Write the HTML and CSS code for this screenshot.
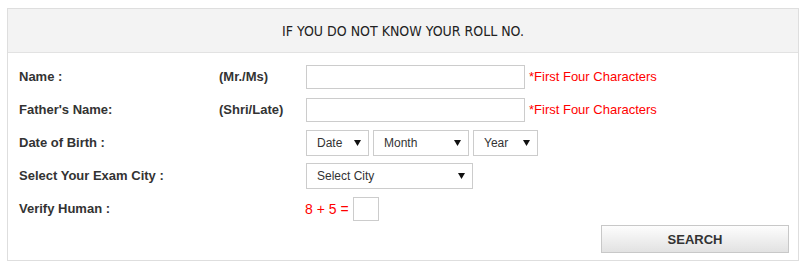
FILE: index.html
```html
<!DOCTYPE html>
<html lang="en">
<head>
    <meta charset="UTF-8">
    <meta name="viewport" content="width=device-width, initial-scale=1.0">
    <title>Find Roll No.</title>
    <link rel="stylesheet" href="styles.css">
</head>
<body>
    <div class="panel">
        <div class="panel-head">
            <h3>IF YOU DO NOT KNOW YOUR ROLL NO.</h3>
        </div>

        <form class="panel-body" id="rollForm">
            <div class="row">
                <label class="lbl" for="name">Name :</label>
                <span class="lbl prefix">(Mr./Ms)</span>
                <div class="field">
                    <input type="text" id="name" class="text-input">
                    <span class="hint">*First Four Characters</span>
                </div>
            </div>

            <div class="row">
                <label class="lbl" for="father">Father's Name:</label>
                <span class="lbl prefix">(Shri/Late)</span>
                <div class="field">
                    <input type="text" id="father" class="text-input">
                    <span class="hint">*First Four Characters</span>
                </div>
            </div>

            <div class="row">
                <label class="lbl">Date of Birth :</label>
                <span class="prefix"></span>
                <div class="field">
                    <span class="select-wrap sel-date">
                        <select><option>Date</option></select>
                        <svg class="arrow" width="7" height="6" viewBox="0 0 7 6"><path d="M0 0H7L3.5 6Z" fill="#111"/></svg>
                    </span>
                    <span class="select-wrap sel-month">
                        <select><option>Month</option></select>
                        <svg class="arrow" width="7" height="6" viewBox="0 0 7 6"><path d="M0 0H7L3.5 6Z" fill="#111"/></svg>
                    </span>
                    <span class="select-wrap sel-year">
                        <select><option>Year</option></select>
                        <svg class="arrow" width="7" height="6" viewBox="0 0 7 6"><path d="M0 0H7L3.5 6Z" fill="#111"/></svg>
                    </span>
                </div>
            </div>

            <div class="row">
                <label class="lbl">Select Your Exam City :</label>
                <span class="prefix"></span>
                <div class="field">
                    <span class="select-wrap sel-city">
                        <select><option>Select City</option></select>
                        <svg class="arrow" width="7" height="6" viewBox="0 0 7 6"><path d="M0 0H7L3.5 6Z" fill="#111"/></svg>
                    </span>
                </div>
            </div>

            <div class="row">
                <label class="lbl" for="captcha">Verify Human :</label>
                <span class="prefix"></span>
                <div class="field">
                    <span class="sum">8 + 5 =</span>
                    <input type="text" id="captcha" class="captcha">
                </div>
            </div>

            <div class="actions">
                <button type="submit">SEARCH</button>
            </div>
        </form>
    </div>
</body>
</html>
```

FILE: styles.css
```css
body {
    margin: 0;
    padding: 8px 13px 0 7px;
    font-family: "Liberation Sans", Arial, sans-serif;
    background-color: #fff;
    color: #333;
}
.panel {
    border: 1px solid #dedede;
}
.panel-head {
    background-color: #f3f3f3;
    border-bottom: 1px solid #e2e2e2;
    height: 43px;
    display: flex;
    align-items: center;
    justify-content: center;
}
.panel-head h3 {
    margin: 0;
    font-family: "DejaVu Sans", sans-serif;
    font-stretch: condensed;
    font-weight: normal;
    font-size: 14px;
    color: #222;
}
.panel-body {
    padding: 7px 9px 7px 11px;
}
.row {
    display: flex;
    align-items: center;
    height: 33px;
}
.lbl {
    font-size: 13px;
    font-weight: bold;
    color: #333;
}
.row > .lbl:first-child {
    width: 200px;
}
.prefix {
    width: 87px;
}
.field {
    display: flex;
    align-items: center;
}
.text-input {
    width: 219px;
    height: 24px;
    box-sizing: border-box;
    border: 1px solid #ccc;
    margin: 0;
    padding: 0 6px;
}
.hint {
    color: #f00;
    font-size: 13px;
    margin-left: 4px;
}
.select-wrap {
    position: relative;
    display: inline-block;
    margin-right: 4px;
}
.select-wrap select {
    -webkit-appearance: none;
    appearance: none;
    height: 26px;
    box-sizing: border-box;
    border: 1px solid #ccc;
    border-radius: 0;
    background-color: #fff;
    font-family: "Liberation Sans", Arial, sans-serif;
    font-size: 12px;
    color: #333;
    padding: 0 0 0 10px;
    margin: 0;
    display: block;
}
.select-wrap .arrow {
    position: absolute;
    right: 8px;
    top: 10px;
    pointer-events: none;
}
.sel-date select { width: 63px; }
.sel-month select { width: 96px; }
.sel-year select { width: 65px; }
.sel-city select { width: 167px; }
.sum {
    color: #f00;
    font-size: 14px;
    margin-left: -1px;
    margin-right: 4px;
}
.captcha {
    width: 26px;
    height: 24px;
    box-sizing: border-box;
    border: 1px solid #ccc;
    margin: 0;
    padding: 0 4px;
}
.actions {
    display: flex;
    justify-content: flex-end;
}
button {
    width: 188px;
    height: 28px;
    border: 1px solid #c8c8c8;
    border-radius: 0;
    background: linear-gradient(#fdfdfd, #e2e2e2);
    font-family: "Liberation Sans", Arial, sans-serif;
    font-size: 13px;
    font-weight: bold;
    color: #333;
    cursor: pointer;
}
```
